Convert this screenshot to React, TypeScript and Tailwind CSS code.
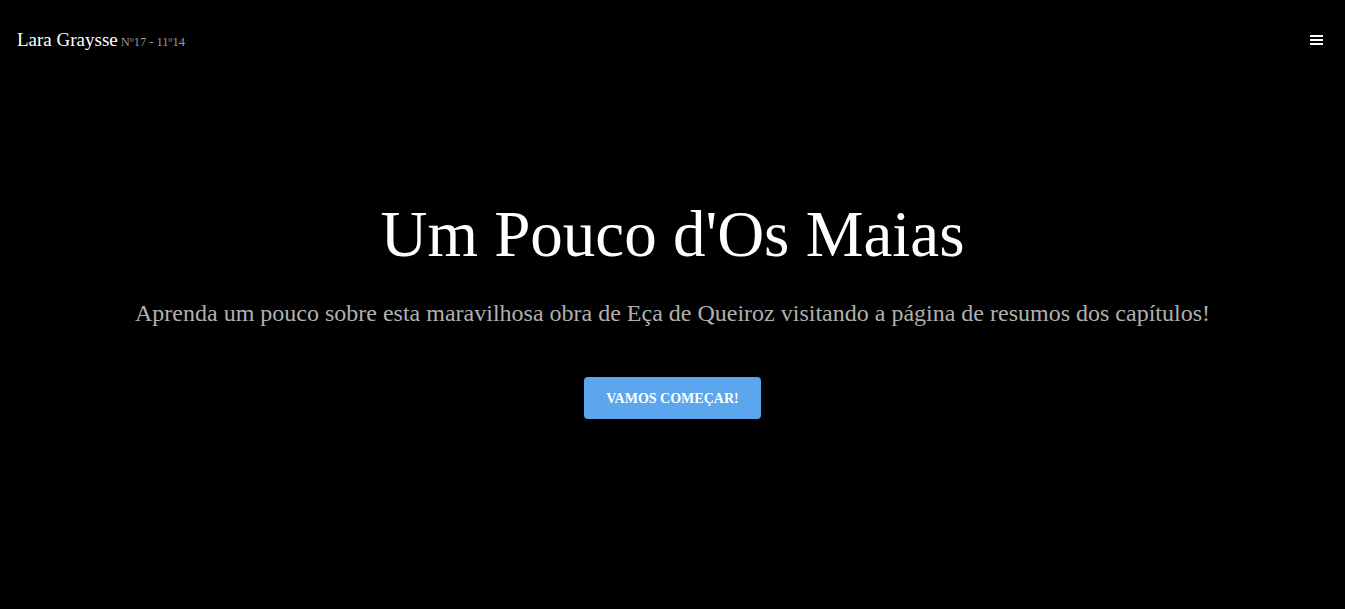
import React from 'react'

const serif = { fontFamily: '"Liberation Serif", "DejaVu Serif", serif' }

export default function App() {
  return (
    <div className="flex h-[609px] w-full flex-col bg-black text-white" style={serif}>
      <header className="flex h-[80px] items-center justify-between px-[17px]">
        <div className="flex items-baseline gap-[3px]">
          <span className="text-[19px] text-white">Lara Graysse</span>
          <span className="text-[12.5px] text-[#9a9a9a]">Nº17 - 11º14</span>
        </div>
        <button className="mr-[5px] flex flex-col gap-[2px]" aria-label="menu">
          <span className="block h-[2px] w-[13px] bg-white" />
          <span className="block h-[2px] w-[13px] bg-white" />
          <span className="block h-[2px] w-[13px] bg-white" />
        </button>
      </header>

      <main className="flex flex-col items-center pt-[122px] text-center">
        <h1 className="text-[65px] leading-none text-white">Um Pouco d'Os Maias</h1>
        <p className="mt-[28px] text-[24px] text-[#b0b0b0]">
          Aprenda um pouco sobre esta maravilhosa obra de Eça de Queiroz visitando a página de resumos dos capítulos!
        </p>
        <button className="mt-[46px] h-[42px] w-[177px] rounded-[4px] bg-[#5ba6ec] text-[14px] font-bold text-white">
          VAMOS COMEÇAR!
        </button>
      </main>
    </div>
  )
}
